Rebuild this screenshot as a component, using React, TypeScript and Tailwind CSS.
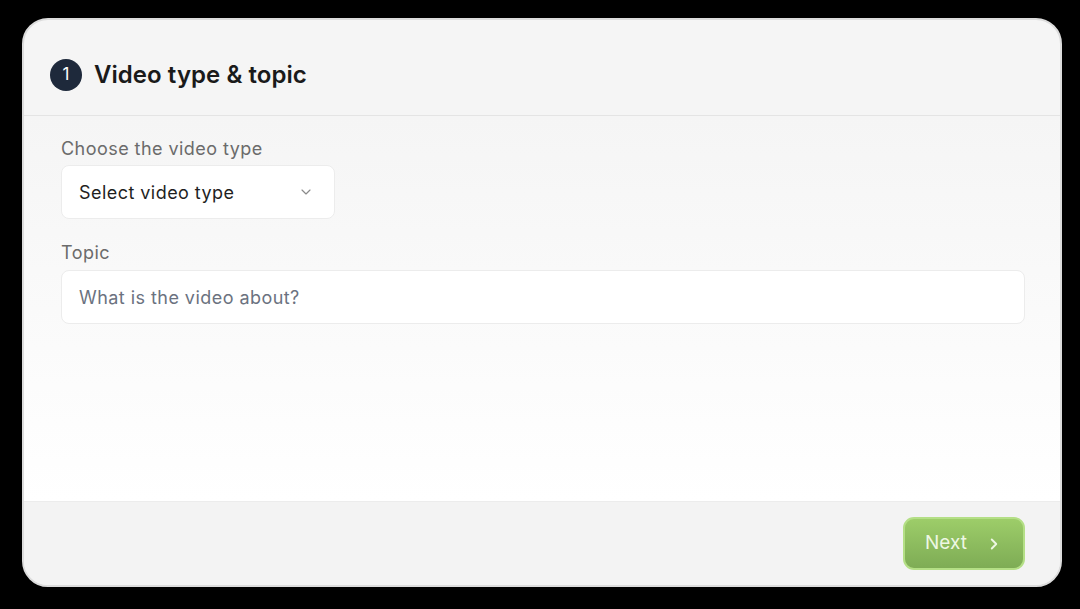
import { ChevronDown, ChevronRight } from "lucide-react";

export default function App() {
  return (
    <div
      className="flex h-[609px] w-[1080px] bg-black pl-[22px] pr-[18px] pt-[18px] pb-[22px]"
      style={{ fontFamily: "Inter, 'Noto Sans', sans-serif" }}
    >
      <div className="flex flex-1 flex-col overflow-hidden rounded-[26px] border-2 border-[#dcdcdc] bg-[#f5f5f5]">
        <div className="flex h-[96px] shrink-0 items-center gap-3 border-b border-[#e4e4e4] px-[26px] pt-[14px]">
          <span className="flex size-8 items-center justify-center rounded-full bg-[#1e293b] text-[17px] text-white">
            1
          </span>
          <h1 className="text-[24px] font-semibold tracking-[0.05px] text-[#1a1a1a]">
            Video type &amp; topic
          </h1>
        </div>
        <div className="flex flex-1 flex-col bg-gradient-to-b from-[#f5f5f5] via-[#fafafa] to-white px-[37px] pt-[19px] tracking-[0.45px]">
          <label className="text-[18px] text-[#6b6b6b]">Choose the video type</label>
          <div className="mt-[3px] flex h-[54px] w-[274px] items-center justify-between rounded-lg border border-[#ececec] bg-white pl-[17px] pr-[20px]">
            <span className="text-[18px] text-[#1f1f1f]">Select video type</span>
            <ChevronDown className="size-4 text-[#8a8a8a]" strokeWidth={1.75} />
          </div>
          <label className="mt-[20px] text-[18px] text-[#6b6b6b]">Topic</label>
          <div className="mt-[4px] flex h-[54px] w-[964px] items-center rounded-lg border border-[#ececec] bg-white pl-[17px]">
            <span className="text-[18px] text-[#6b7280]">What is the video about?</span>
          </div>
        </div>
        <div className="flex h-[84px] shrink-0 items-center justify-end border-t border-[#ececec] bg-[#f3f3f3] pr-[35px]">
          <button className="flex h-[53px] w-[122px] items-center justify-center gap-[18px] rounded-[11px] border-2 border-[#b4df86] bg-gradient-to-b from-[#9dcd69] to-[#7eac55] text-[19px] text-[#eef7e4]">
            Next
            <ChevronRight className="size-[18px]" strokeWidth={2.5} />
          </button>
        </div>
      </div>
    </div>
  );
}
